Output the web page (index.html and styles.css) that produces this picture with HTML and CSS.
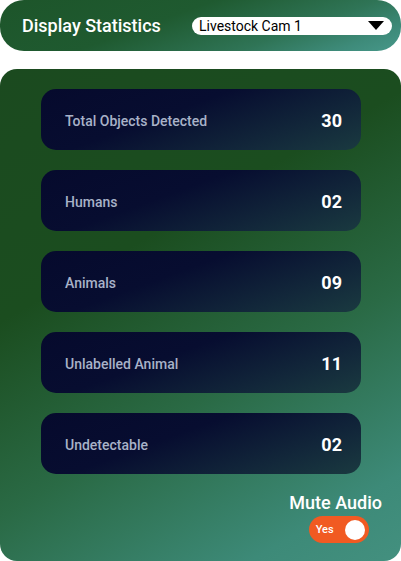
FILE: index.html
```html
<!DOCTYPE html>
<html>
<head>
<meta charset="utf-8">
<link rel="stylesheet" href="styles.css">
</head>
<body>
<div class="page">
  <header class="header">
    <h1 class="title">Display Statistics</h1>
    <div class="select">
      <span class="select-text">Livestock Cam 1</span>
      <svg class="caret" width="16" height="9" viewBox="0 0 16 9"><path d="M0 0 L16 0 L8 9 Z" fill="#000"/></svg>
    </div>
  </header>
  <main class="panel">
    <div class="cards">
      <div class="card"><span class="label">Total Objects Detected</span><span class="value">30</span></div>
      <div class="card"><span class="label">Humans</span><span class="value">02</span></div>
      <div class="card"><span class="label">Animals</span><span class="value">09</span></div>
      <div class="card"><span class="label">Unlabelled Animal</span><span class="value">11</span></div>
      <div class="card"><span class="label">Undetectable</span><span class="value">02</span></div>
    </div>
    <div class="mute">
      <span class="mute-label">Mute Audio</span>
      <div class="toggle"><span class="toggle-text">Yes</span><span class="knob"></span></div>
    </div>
  </main>
</div>
</body>
</html>
```

FILE: styles.css
```css
* { box-sizing: border-box; }
html, body { margin: 0; padding: 0; background: #fff; }
body { font-family: Roboto, "Noto Sans", sans-serif; width: 401px; height: 561px; overflow: hidden; }
.page { display: flex; flex-direction: column; gap: 18px; }
.header {
  height: 51px;
  border-radius: 24px;
  background: linear-gradient(160deg, #1d552a 0%, #1f5a30 40%, #2f7456 70%, #3e8b7a 88%, #47988a 100%);
  display: flex; align-items: center; justify-content: space-between;
  padding: 0 9px 0 22px;
}
.title { margin: 0; color: #fff; font-size: 18px; font-weight: 500; }
.select {
  width: 200px; height: 18px; background: #fff; border-radius: 9px;
  display: flex; align-items: center; justify-content: space-between;
  padding: 0 8px 0 7px;
}
.select-text { font-size: 14px; color: #000; line-height: 18px; }
.caret { display: block; }
.panel {
  height: 492px;
  border-radius: 17px;
  background: linear-gradient(150deg, #1b4a1f 0%, #1b4d1f 35%, #2a6a45 62%, #3d8a78 88%, #43907f 100%);
  padding: 20px 0 0 41px;
  display: flex; flex-direction: column;
}
.cards { display: flex; flex-direction: column; gap: 20px; width: 320px; }
.card {
  height: 61px; border-radius: 15px;
  background: linear-gradient(160deg, #060a2d 0%, #070d30 40%, #12273a 75%, #1a3a40 100%);
  display: flex; align-items: center; justify-content: space-between;
  padding: 2px 19px 0 24px;
}
.label { color: #a8b2c8; font-size: 14px; font-weight: 500; }
.value { color: #fff; font-size: 18px; font-weight: 700; }
.mute { align-self: flex-end; margin-right: 19px; margin-top: 18px; display: flex; flex-direction: column; align-items: center; gap: 3px; }
.mute-label { color: #fff; font-size: 18px; font-weight: 500; }
.toggle {
  width: 60px; height: 27px; border-radius: 14px; background: #f15a22;
  display: flex; align-items: center; justify-content: space-between;
  padding: 0 4px 0 7px; margin-left: 6px;
}
.toggle-text { color: #fff; font-size: 11px; font-weight: 500; }
.knob { width: 20px; height: 20px; border-radius: 50%; background: #fff; }
```
